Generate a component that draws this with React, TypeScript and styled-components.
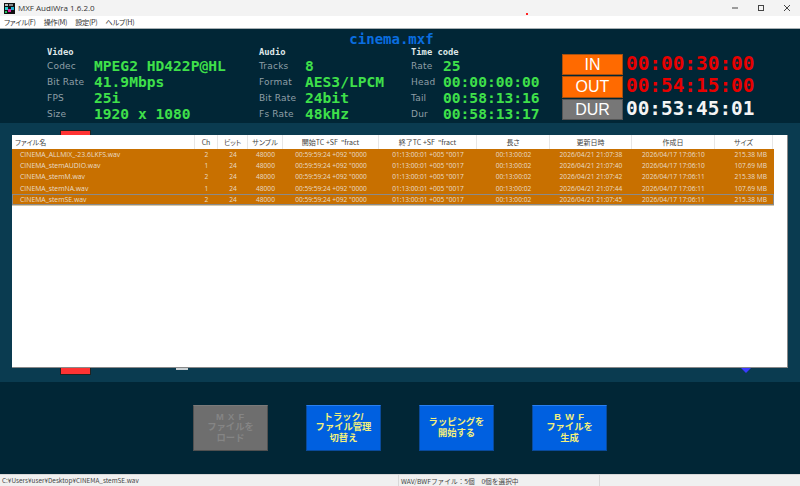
import React from "react";
import styled, { createGlobalStyle } from "styled-components";

const Global = createGlobalStyle`
  html, body { margin: 0; padding: 0; width: 800px; height: 486px; overflow: hidden; background: #012636; }
  * { box-sizing: border-box; }
`;

const UI = `"Open Sans", "Noto Sans CJK JP", sans-serif`;
const CJK = `"Noto Sans CJK JP", "Noto Sans", sans-serif`;
const BTN = `"Liberation Sans", "Noto Sans CJK JP", sans-serif`;
const MONO = `"DejaVu Sans Mono", monospace`;
const SANS = `"DejaVu Sans", sans-serif`;

const Win = styled.div`
  width: 800px; height: 486px; display: flex; flex-direction: column;
  font-family: ${UI}; overflow: hidden;
`;
const TitleBar = styled.div`
  height: 16px; background: #f3f3f3; display: flex; align-items: center; padding-left: 4px;
  position: relative; flex: none;
`;
const TitleText = styled.span`
  font: 8px/16px ${UI}; color: #333; margin-left: 3px;
`;
const RedDot = styled.i`
  position: absolute; left: 526px; top: 13px; width: 2px; height: 2px; background: #f22;
`;
const WinControls = styled.div`
  margin-left: auto; display: flex; height: 16px; align-items: center; padding-right: 9px; gap: 18px;
`;
const MenuBar = styled.div`
  height: 13px; background: #fff; border-bottom: 1px solid #a8b0b4; display: flex; gap: 8px;
  padding-left: 4px; flex: none; font: 7.2px/12px ${CJK}; color: #333;
  font-feature-settings: "palt"; letter-spacing: -.3px;
`;
const InfoPanel = styled.div`
  height: 94px; background: #012636; flex: none; position: relative; padding: 17px 0 0 47px;
  display: flex;
`;
const FileName = styled.div`
  position: absolute; left: 0; width: 783px; top: 3px; text-align: center;
  font: bold 14px/15px ${MONO}; color: #0a6ee0;
`;
const InfoGroup = styled.div<{ $w: number; $label: number }>`
  width: ${p => p.$w}px; flex: none;
  --label: ${p => p.$label}px;
`;
const GroupTitle = styled.div`
  font: bold 8.8px/13px ${MONO}; color: #dfe6e8; height: 12px;
`;
const InfoRow = styled.div`
  display: flex; height: 16px; align-items: center;
`;
const Label = styled.span`
  width: var(--label); flex: none; font: 9px/16px ${SANS}; color: #8f9fa6; letter-spacing: .2px; white-space: nowrap;
`;
const Value = styled.span`
  font: bold 14.6px/16px ${MONO}; color: #3fe04a; white-space: nowrap;
`;
const TCBlock = styled.div`
  display: flex; flex-direction: column; gap: 1.5px; margin-top: 8px;
`;
const TCRow = styled.div`
  display: flex; align-items: center; gap: 3px; height: 21px;
`;
const TCBadge = styled.div<{ $grey?: boolean }>`
  width: 61px; height: 21.5px; background: ${p => (p.$grey ? "#777" : "#ff6a00")};
  border: 1px solid ${p => (p.$grey ? "#555" : "#a65010")};
  color: #fff; font: 16px/19px "Liberation Sans", sans-serif; text-align: center;
`;
const TCValue = styled.span<{ $white?: boolean }>`
  font: bold 19.4px/21px ${MONO}; color: ${p => (p.$white ? "#f4f4f4" : "#e80000")};
  margin-top: -3px;
`;
const MidPanel = styled.div`
  height: 259px; flex: none; background: #0a3b50; position: relative; padding: 12px 0 0 12px;
`;
const RedMarker = styled.div`
  position: absolute; left: 60px; top: 7px; width: 31px; height: 245px;
  background: #f33; border: 1px solid #222;
`;
const Tick = styled.div`
  position: absolute; left: 176px; top: 244px; width: 12px; height: 3px; background: #c8d0d4;
`;
const BlueMark = styled.svg`
  position: absolute; left: 739px; top: 243px;
`;
const TableBox = styled.div`
  position: relative; width: 776px; height: 233px; background: #fff;
  border-bottom: 1px solid #888; border-right: 1px solid #888;
`;
const columns = "183px 23px 30px 35px 96px 98px 73px 82px 83px 58px";
const HeaderRow = styled.div`
  display: grid; grid-template-columns: ${columns}; width: 762px; height: 14px;
  font: 7px/15px ${CJK}; color: #444; font-feature-settings: "palt";
`;
const HCell = styled.div<{ $left?: boolean }>`
  border-right: 1px solid #e6e6e6; text-align: ${p => (p.$left ? "left" : "center")};
  padding-left: ${p => (p.$left ? "3px" : "0")}; white-space: pre; overflow: hidden;
`;
const Rows = styled.div`
  width: 762px; background: #c87000; border-bottom: 1px solid #d8c8a8;
`;
const Row = styled.div<{ $focus?: boolean }>`
  display: grid; grid-template-columns: ${columns}; height: 11.2px;
  font: 6.6px/11px ${UI}; color: #e8dcc8;
  outline: ${p => (p.$focus ? "1px solid #8a8a8a" : "none")}; outline-offset: -1px;
`;
const Cell = styled.div<{ $a?: "l" | "c" | "r" }>`
  text-align: ${p => (p.$a === "l" ? "left" : p.$a === "r" ? "right" : "center")};
  padding-left: ${p => (p.$a === "l" ? "8px" : "0")};
  padding-right: ${p => (p.$a === "r" ? "6px" : "0")};
  font-size: ${p => (p.$a === "l" ? "6.85px" : "6.6px")};
  white-space: nowrap; overflow: hidden;
`;
const ActionBar = styled.div`
  height: 92px; flex: none; background: #012636; display: flex; gap: 38px; padding: 23px 0 0 193px;
`;
const ActionBtn = styled.div<{ $off?: boolean }>`
  width: 75px; height: 46px; display: flex; align-items: center; justify-content: center; text-align: center;
  background: ${p => (p.$off ? "#6e6e6e" : "#0060e0")};
  border: 1px solid ${p => (p.$off ? "#505050" : "#0a4a9a")};
  border-top-color: ${p => (p.$off ? "#7a7a7a" : "#2a80f0")};
  color: ${p => (p.$off ? "#858585" : "#f4f07c")};
  font: bold 9.3px/10.5px ${BTN};
  padding-bottom: 1px;
`;
const Spaced = styled.span`
  letter-spacing: .8px;
`;
const StatusBar = styled.div`
  height: 13px; flex: none; background: #f0f0f0; border-top: 1px solid #d8d8d8; display: flex;
  font: 6.4px/12px ${UI}; color: #444; position: relative;
`;
const StatusCell = styled.div<{ $w: number; $size: number }>`
  width: ${p => p.$w}px; flex: none; padding-left: 2px; border-right: 1px solid #d8d8d8; white-space: nowrap;
  font-family: ${CJK}; font-size: ${p => p.$size}px;
`;

const files = [
  ["CINEMA_ALLMIX_-23.6LKFS.wav", "2", "2026/04/21 21:07:38", "2026/04/17 17:06:10", "215.38 MB"],
  ["CINEMA_stemAUDIO.wav", "1", "2026/04/21 21:07:40", "2026/04/17 17:06:10", "107.69 MB"],
  ["CINEMA_stemM.wav", "2", "2026/04/21 21:07:42", "2026/04/17 17:06:11", "215.38 MB"],
  ["CINEMA_stemNA.wav", "1", "2026/04/21 21:07:44", "2026/04/17 17:06:11", "107.69 MB"],
  ["CINEMA_stemSE.wav", "2", "2026/04/21 21:07:45", "2026/04/17 17:06:11", "215.38 MB"],
];

const headers = ["ファイル名", "Ch", "ビット", "サンプル", "開始TC +SF  \"fract", "終了TC +SF  \"fract", "長さ", "更新日時", "作成日", "サイズ"];

const video = [["Codec", "MPEG2 HD422P@HL"], ["Bit Rate", "41.9Mbps"], ["FPS", "25i"], ["Size", "1920 x 1080"]];
const audio = [["Tracks", "8"], ["Format", "AES3/LPCM"], ["Bit Rate", "24bit"], ["Fs Rate", "48kHz"]];
const time = [["Rate", "25"], ["Head", "00:00:00:00"], ["Tail", "00:58:13:16"], ["Dur", "00:58:13:17"]];

const Group = ({ title, rows, w, label }: { title: string; rows: string[][]; w: number; label: number }) => (
  <InfoGroup $w={w} $label={label}>
    <GroupTitle>{title}</GroupTitle>
    {rows.map(([l, v]) => (
      <InfoRow key={l}>
        <Label>{l}</Label>
        <Value>{v}</Value>
      </InfoRow>
    ))}
  </InfoGroup>
);

export default function App() {
  return (
    <Win>
      <Global />
      <TitleBar>
        <svg width="11" height="11" viewBox="0 0 11 11">
          <rect width="11" height="11" fill="#111" />
          <rect x="1" y="1" width="3" height="2" fill="#bbb" />
          <rect x="5" y="1" width="4" height="2" fill="#888" />
          <rect x="1" y="4" width="3" height="3" fill="#2ad0d0" />
          <rect x="4" y="6" width="3" height="3" fill="#e020a0" />
          <rect x="7" y="4" width="3" height="3" fill="#20b0d0" />
          <rect x="1" y="8" width="2" height="2" fill="#20c060" />
        </svg>
        <TitleText>MXF AudiWra 1.6.2.0</TitleText>
        <RedDot />
        <WinControls>
          <svg width="8" height="8" viewBox="0 0 8 8"><path d="M1 4h6" stroke="#444" /></svg>
          <svg width="8" height="8" viewBox="0 0 8 8"><rect x="1.5" y="1.5" width="5" height="5" fill="none" stroke="#444" /></svg>
          <svg width="8" height="8" viewBox="0 0 8 8"><path d="M1 1l6 6M7 1l-6 6" stroke="#444" /></svg>
        </WinControls>
      </TitleBar>
      <MenuBar>
        <span>ファイル(F)</span>
        <span>操作(M)</span>
        <span>設定(P)</span>
        <span>ヘルプ(H)</span>
      </MenuBar>
      <InfoPanel>
        <FileName>cinema.mxf</FileName>
        <Group title="Video" rows={video} w={212} label={47} />
        <Group title="Audio" rows={audio} w={152} label={46} />
        <Group title="Time code" rows={time} w={151} label={32} />
        <TCBlock>
          <TCRow><TCBadge>IN</TCBadge><TCValue>00:00:30:00</TCValue></TCRow>
          <TCRow><TCBadge>OUT</TCBadge><TCValue>00:54:15:00</TCValue></TCRow>
          <TCRow><TCBadge $grey>DUR</TCBadge><TCValue $white>00:53:45:01</TCValue></TCRow>
        </TCBlock>
      </InfoPanel>
      <MidPanel>
        <RedMarker />
        <Tick />
        <BlueMark width="14" height="7" viewBox="0 0 14 7"><path d="M0 0h14L7 7z" fill="#3a3aff" /></BlueMark>
        <TableBox>
          <HeaderRow>
            {headers.map((h, i) => <HCell key={h} $left={i === 0}>{h}</HCell>)}
          </HeaderRow>
          <Rows>
            {files.map((f, i) => (
              <Row key={f[0]} $focus={i === 4}>
                <Cell $a="l">{f[0]}</Cell>
                <Cell>{f[1]}</Cell>
                <Cell>24</Cell>
                <Cell>48000</Cell>
                <Cell>00:59:59:24 +092 "0000</Cell>
                <Cell>01:13:00:01 +005 "0017</Cell>
                <Cell>00:13:00:02</Cell>
                <Cell>{f[2]}</Cell>
                <Cell>{f[3]}</Cell>
                <Cell $a="r">{f[4]}</Cell>
              </Row>
            ))}
          </Rows>
        </TableBox>
      </MidPanel>
      <ActionBar>
        <ActionBtn $off><span><Spaced>M X F</Spaced><br />ファイルを<br />ロード</span></ActionBtn>
        <ActionBtn><span>トラック/<br />ファイル管理<br />切替え</span></ActionBtn>
        <ActionBtn><span>ラッピングを<br />開始する</span></ActionBtn>
        <ActionBtn><span><Spaced>B W F</Spaced><br />ファイルを<br />生成</span></ActionBtn>
      </ActionBar>
      <StatusBar>
        <StatusCell $w={399} $size={6.4}>C:¥Users¥user¥Desktop¥CINEMA_stemSE.wav</StatusCell>
        <StatusCell $w={201} $size={6.7}>WAV/BWFファイル：5個　0個を選択中</StatusCell>
      </StatusBar>
    </Win>
  );
}
